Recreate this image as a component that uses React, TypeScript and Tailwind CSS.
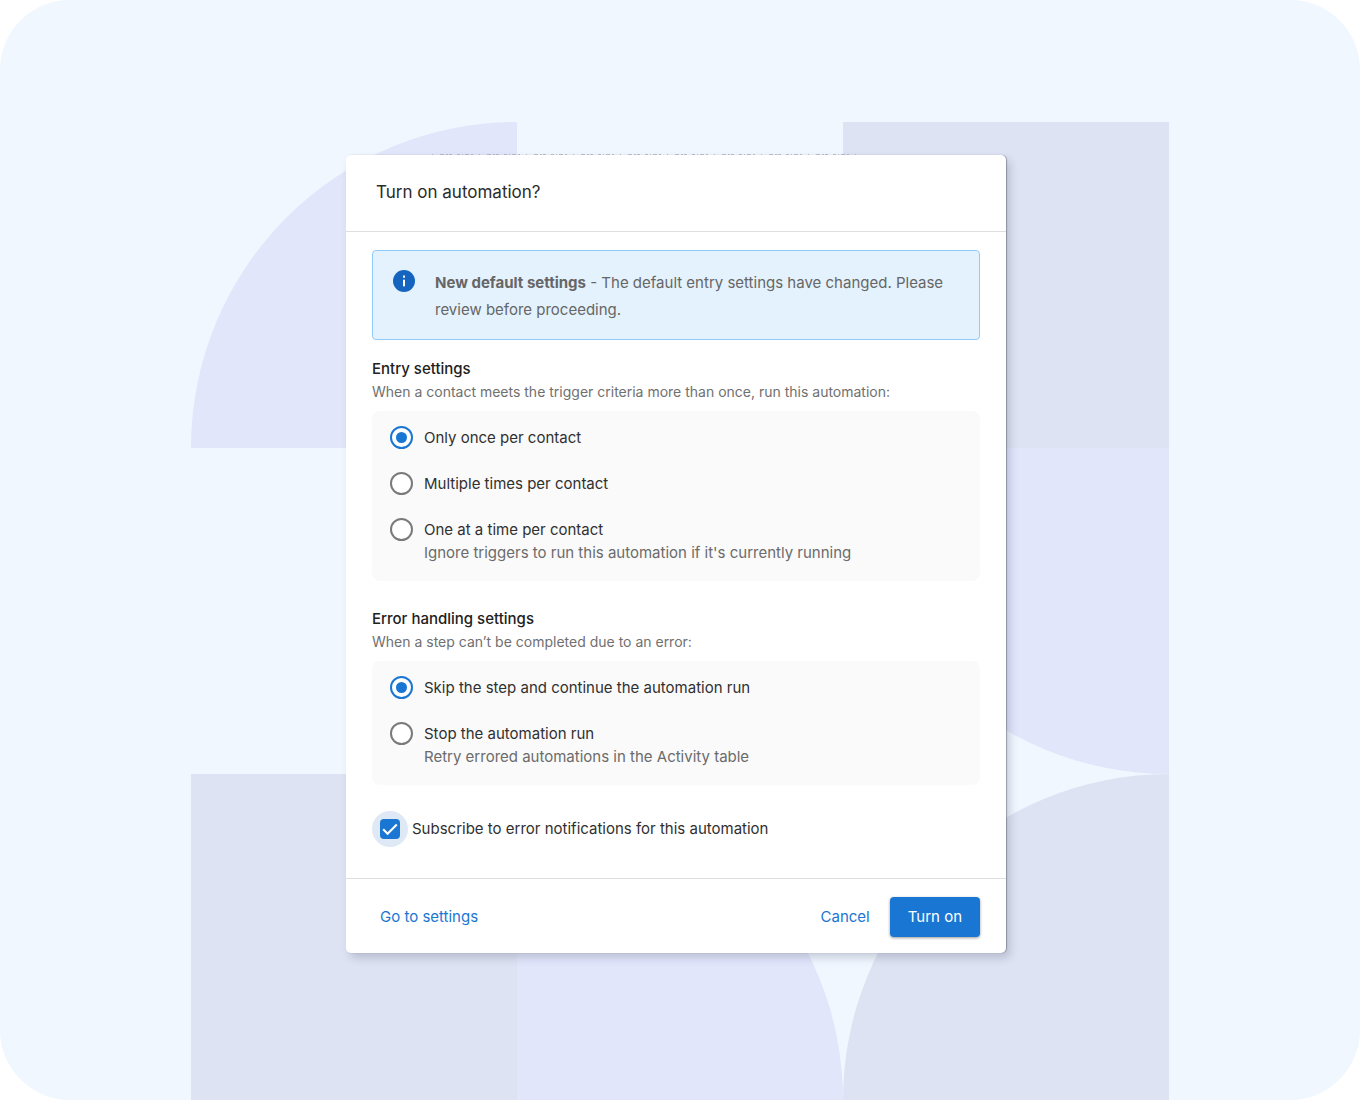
import { useState } from "react";

interface Option {
  value: string;
  label: string;
  hint?: string;
}

const entryOptions: Option[] = [
  { value: "once", label: "Only once per contact" },
  { value: "multiple", label: "Multiple times per contact" },
  {
    value: "one-at-a-time",
    label: "One at a time per contact",
    hint: "Ignore triggers to run this automation if it's currently running",
  },
];

const errorOptions: Option[] = [
  { value: "skip", label: "Skip the step and continue the automation run" },
  { value: "stop", label: "Stop the automation run", hint: "Retry errored automations in the Activity table" },
];

function Backdrop() {
  return (
    <svg
      className="absolute inset-0 h-full w-full"
      viewBox="0 0 1360 1100"
      preserveAspectRatio="xMidYMin slice"
      aria-hidden="true"
    >
      <path d="M517 122V448H191A326 326 0 0 1 517 122Z" fill="#e1e6fb" />
      <rect x="843" y="122" width="326" height="326" fill="#dde3f3" />
      <path d="M843 448H1169V774A326 326 0 0 1 843 448Z" fill="#e1e6fb" />
      <rect x="191" y="774" width="326" height="326" fill="#dde3f3" />
      <path d="M517 774A326 326 0 0 1 843 1100H517Z" fill="#e1e6fb" />
      <path d="M1169 774V1100H843A326 326 0 0 1 1169 774Z" fill="#dde3f3" />
      <path
        d="M432 154.5H857"
        stroke="#9ca3af"
        strokeOpacity="0.6"
        strokeDasharray="1 7 4 2 2 1 3 5 3 2 1 2 4 2 2 6"
      />
    </svg>
  );
}

function InfoIcon() {
  return (
    <svg className="mt-px size-[22px] shrink-0" viewBox="0 0 22 22" aria-hidden="true">
      <circle cx="11" cy="11" r="11" fill="#1565c0" />
      <rect x="10" y="5.5" width="2" height="2.2" fill="#fff" />
      <rect x="10" y="9.7" width="2" height="6.6" fill="#fff" />
    </svg>
  );
}

interface OptionGroupProps {
  name: string;
  title: string;
  description: string;
  options: Option[];
  value: string;
  onChange: (value: string) => void;
}

function OptionGroup({ name, title, description, options, value, onChange }: OptionGroupProps) {
  return (
    <section role="radiogroup" aria-labelledby={`${name}-title`}>
      <h3 id={`${name}-title`} className="text-[15px] leading-6 font-medium text-[#212121]">
        {title}
      </h3>
      <p className="text-sm leading-[22px] text-[#707070]">{description}</p>

      <div className="mt-2 flex flex-col gap-[23px] rounded-lg bg-[#fafafa] px-[18px] pt-[15px] pb-[17px]">
        {options.map((option) => (
          <label key={option.value} className="flex items-start gap-[11px] text-[15px] leading-[23px] text-[#303030]">
            <input
              type="radio"
              name={name}
              value={option.value}
              checked={value === option.value}
              onChange={() => onChange(option.value)}
              className="grid size-[23px] shrink-0 appearance-none place-items-center rounded-full border-2 border-[#7a7a7a] bg-white before:size-[11px] before:rounded-full checked:border-[#1976d2] checked:before:bg-[#1976d2]"
            />
            <span>
              {option.label}
              {option.hint && <span className="block text-[#6b6b6b]">{option.hint}</span>}
            </span>
          </label>
        ))}
      </div>
    </section>
  );
}

export default function App() {
  const [entry, setEntry] = useState("once");
  const [errorMode, setErrorMode] = useState("skip");
  const [subscribed, setSubscribed] = useState(true);

  return (
    <div className="min-h-screen bg-white font-['Inter',sans-serif]">
      <main className="relative flex min-h-screen items-start justify-center overflow-hidden rounded-[70px] bg-[#f0f7ff] pt-[155px] pr-2 pb-20">
        <Backdrop />

        <div
          role="dialog"
          aria-labelledby="dialog-title"
          className="relative w-full max-w-[660px] rounded-[5px] bg-white shadow-[1px_0_1px_rgba(60,65,80,0.4),4px_5px_8px_rgba(60,65,90,0.22)]"
        >
          <header className="border-b border-[#dedede] px-[30px] pt-[23px] pb-[25px]">
            <h2 id="dialog-title" className="text-[17px] leading-7 text-[#2b2b2b]">
              Turn on automation?
            </h2>
          </header>

          <div className="px-[26px] pt-[18px] pb-[31px]">
            <div className="flex items-start gap-5 rounded border border-[#90caf9] bg-[#e4f2fd] px-5 pt-[18px] pb-4">
              <InfoIcon />
              <p className="text-[15px] leading-[27px] text-[#666666]">
                <strong className="font-bold">New default settings</strong> - The default entry settings have
                changed. Please review before proceeding.
              </p>
            </div>

            <div className="mt-[17px] flex flex-col gap-[26px]">
              <OptionGroup
                name="entry"
                title="Entry settings"
                description="When a contact meets the trigger criteria more than once, run this automation:"
                options={entryOptions}
                value={entry}
                onChange={setEntry}
              />
              <OptionGroup
                name="error"
                title="Error handling settings"
                description="When a step can’t be completed due to an error:"
                options={errorOptions}
                value={errorMode}
                onChange={setErrorMode}
              />
            </div>

            <label className="mt-[26px] flex items-center gap-1 text-[15px] leading-6 text-[#303030]">
              <span className="relative grid size-9 place-items-center rounded-full bg-[#dfe9f6]">
                <input
                  type="checkbox"
                  checked={subscribed}
                  onChange={() => setSubscribed(!subscribed)}
                  className="peer size-5 appearance-none rounded-sm border-2 border-[#7a7a7a] bg-white checked:border-[#1976d2] checked:bg-[#1976d2]"
                />
                <svg
                  className="pointer-events-none absolute inset-2 size-5 opacity-0 peer-checked:opacity-100"
                  viewBox="0 0 20 20"
                  aria-hidden="true"
                >
                  <path d="M3.2 10.3L7.6 14.7L16.8 5.4" fill="none" stroke="#fff" strokeWidth="2.1" />
                </svg>
              </span>
              Subscribe to error notifications for this automation
            </label>
          </div>

          <footer className="flex items-center border-t border-[#dedede] px-[26px] pt-[18px] pb-4 text-[15px] leading-6">
            <a href="#settings" className="px-2 text-[#1976d2]">
              Go to settings
            </a>
            <button type="button" className="ml-auto px-2 text-[#1976d2]">
              Cancel
            </button>
            <button
              type="button"
              className="ml-3 rounded bg-[#1976d2] px-[18px] py-2 text-white shadow-[0_1px_3px_rgba(0,0,0,0.4)]"
            >
              Turn on
            </button>
          </footer>
        </div>
      </main>
    </div>
  );
}
